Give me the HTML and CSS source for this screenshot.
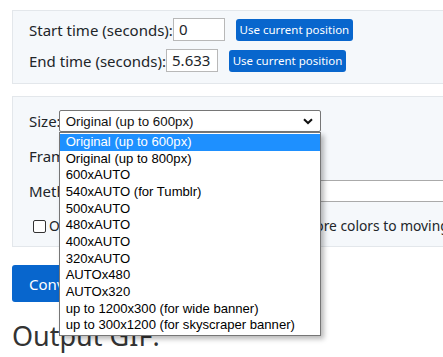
FILE: index.html
```html
<!DOCTYPE html>
<html>
<head>
<meta charset="utf-8">
<link rel="stylesheet" href="styles.css">
</head>
<body>
<div class="page">
  <div class="panel panel-time">
    <div class="trow">
      <label class="lbl">Start time (seconds):</label>
      <span class="tinput">0</span>
      <button class="btn-small">Use current position</button>
    </div>
    <div class="trow">
      <label class="lbl">End time (seconds):</label>
      <span class="tinput">5.633</span>
      <button class="btn-small">Use current position</button>
    </div>
  </div>

  <div class="panel panel-opts">
    <div class="orow">
      <label class="lbl">Size:</label>
      <div class="select-wrap">
        <div class="select">
          <span>Original (up to 600px)</span>
          <svg class="chev" width="10" height="7" viewBox="0 0 10 7"><path d="M1 1.2 L5 5 L9 1.2" fill="none" stroke="#111" stroke-width="2"/></svg>
        </div>
        <ul class="listbox">
          <li class="sel">Original (up to 600px)</li>
          <li>Original (up to 800px)</li>
          <li>600xAUTO</li>
          <li>540xAUTO (for Tumblr)</li>
          <li>500xAUTO</li>
          <li>480xAUTO</li>
          <li>400xAUTO</li>
          <li>320xAUTO</li>
          <li>AUTOx480</li>
          <li>AUTOx320</li>
          <li>up to 1200x300 (for wide banner)</li>
          <li>up to 300x1200 (for skyscraper banner)</li>
        </ul>
      </div>
    </div>
    <div class="orow">
      <label class="lbl">Frame rate (FPS):</label>
      <span class="box box-frame">10</span>
    </div>
    <div class="orow">
      <label class="lbl">Method:</label>
      <span class="box box-method">FFMPEG</span>
    </div>
    <div class="orow crow">
      <span class="check"></span>
      <label class="lbl lbl-check">Optimize for static background (assign more colors to moving parts)</label>
    </div>
  </div>

  <button class="btn-convert">Convert to GIF!</button>
  <h2 class="out">Output GIF:</h2>
</div>
</body>
</html>
```

FILE: styles.css
```css
html, body {
  margin: 0;
  padding: 0;
  background: #fff;
  overflow: hidden;
  height: 357px;
}
.page {
  padding: 10px 0 0 12px;
  width: 520px;
  font-family: "Noto Sans", sans-serif;
  font-size: 15px;
  color: #212529;
}
.panel {
  background: #f5f8fb;
  border: 1px solid #e3e7eb;
}
.panel-time {
  padding: 7px 16px 11px 16px;
  display: flex;
  flex-direction: column;
  gap: 8px;
}
.trow {
  display: flex;
  align-items: center;
  height: 23px;
}
.lbl {
  white-space: nowrap;
  line-height: 20px;
}
.tinput {
  box-sizing: border-box;
  width: 52px;
  height: 23px;
  margin-left: 0;
  border: 1px solid #b8b8b8;
  background: #fff;
  padding: 0 5px;
  line-height: 21px;
  overflow: hidden;
  white-space: nowrap;
  font-size: 15px;
  flex-shrink: 0;
}
.btn-small {
  margin-left: 11px;
  box-sizing: border-box;
  width: 117px;
  height: 22px;
  border: none;
  border-radius: 3px;
  background: #0866cd;
  color: #fff;
  font-family: "Noto Sans", sans-serif;
  font-size: 11.5px;
  padding: 0;
  flex-shrink: 0;
}
.panel-opts {
  margin-top: 12px;
  padding: 13px 16px 9px 16px;
  display: flex;
  flex-direction: column;
  gap: 13px;
}
.orow {
  display: flex;
  align-items: center;
  height: 22px;
}
.select-wrap {
  position: relative;
  margin-left: -2px;
}
.select {
  box-sizing: border-box;
  width: 262px;
  height: 22px;
  border: 1px solid #767676;
  border-radius: 2px;
  background: #fff;
  display: flex;
  align-items: center;
  justify-content: space-between;
  padding: 0 7px 0 6px;
  font-family: "Liberation Sans", Arial, sans-serif;
  font-size: 13.3px;
  color: #111;
}
.chev { display: block; }
.listbox {
  position: absolute;
  left: 0;
  top: 22px;
  z-index: 5;
  box-sizing: border-box;
  width: 262px;
  margin: 0;
  padding: 1px 0 1px 0;
  list-style: none;
  background: #fff;
  border: 1px solid #767676;
  box-shadow: 3px 3px 5px rgba(0,0,0,0.28);
  font-family: "Liberation Sans", Arial, sans-serif;
  font-size: 13.1px;
  color: #000;
}
.listbox li {
  height: 16.67px;
  line-height: 16.67px;
  padding-left: 6px;
  white-space: nowrap;
}
.listbox li.sel {
  background: #1e90ff;
  color: #fff;
}
.box {
  box-sizing: border-box;
  height: 22px;
  border: 1px solid #aaa;
  background: #fff;
  padding: 0 6px;
  line-height: 20px;
  flex-shrink: 0;
}
.box-frame {
  margin-left: 6px;
  width: 100px;
}
.box-method {
  margin-left: 6px;
  width: 400px;
}
.crow {
  padding-left: 4px;
  gap: 3px;
}
.check {
  box-sizing: border-box;
  width: 13px;
  height: 13px;
  flex-shrink: 0;
  border: 1px solid #333;
  border-radius: 2px;
  background: #fff;
}
.lbl-check {
  font-size: 13.8px;
}
.btn-convert {
  margin-top: 18px;
  display: block;
  height: 37px;
  padding: 0 17px;
  border: none;
  border-radius: 3px;
  background: #0866cd;
  color: #fff;
  font-family: "Noto Sans", sans-serif;
  font-size: 15px;
}
.out {
  margin: 16px 0 0 0;
  font-family: "Noto Sans", sans-serif;
  font-weight: 400;
  font-size: 27px;
  color: #333;
  line-height: 36px;
}
```
